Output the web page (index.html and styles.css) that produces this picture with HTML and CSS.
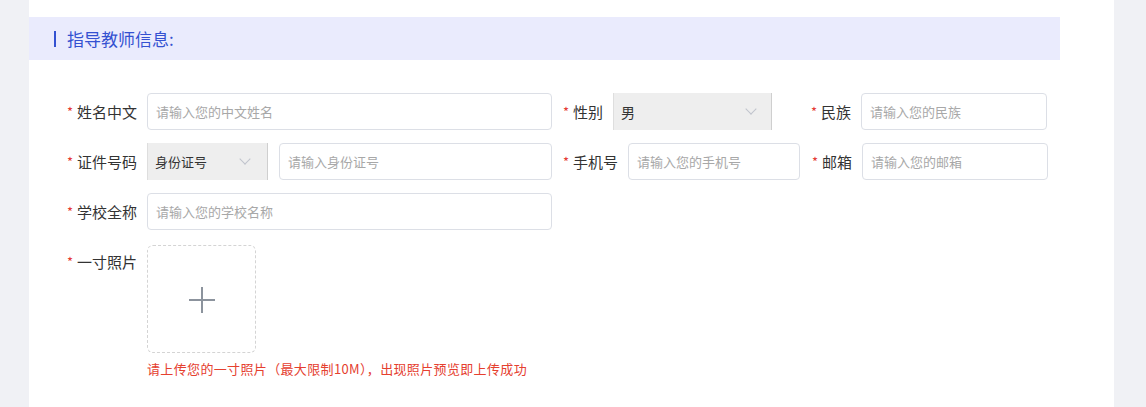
FILE: index.html
```html
<!DOCTYPE html>
<html lang="zh">
<head>
	<meta charset="utf-8">
	<meta name="viewport" content="width=device-width, initial-scale=1.0">
	<link rel="stylesheet" href="styles.css">
	<title>指导教师信息</title>
</head>
<body>
	<div class="page">
		<div class="panel">
			<div class="section-title"><span class="bar"></span>指导教师信息:</div>
			<form class="form">
				<div class="row">
					<div class="field f1">
						<label class="label"><span class="star">*</span>姓名中文</label>
						<input class="input" placeholder="请输入您的中文姓名">
					</div>
					<div class="field f2">
						<label class="label"><span class="star">*</span>性别</label>
						<div class="select sel-sex">男<span class="chev"></span></div>
					</div>
					<div class="field f3">
						<label class="label"><span class="star">*</span>民族</label>
						<input class="input" placeholder="请输入您的民族">
					</div>
				</div>
				<div class="row">
					<div class="field f1">
						<label class="label"><span class="star">*</span>证件号码</label>
						<div class="select sel-id">身份证号<span class="chev"></span></div>
						<input class="input" placeholder="请输入身份证号">
					</div>
					<div class="field f2b">
						<label class="label"><span class="star">*</span>手机号</label>
						<input class="input" placeholder="请输入您的手机号">
					</div>
					<div class="field f3">
						<label class="label"><span class="star">*</span>邮箱</label>
						<input class="input" placeholder="请输入您的邮箱">
					</div>
				</div>
				<div class="row">
					<div class="field f1">
						<label class="label"><span class="star">*</span>学校全称</label>
						<input class="input" placeholder="请输入您的学校名称">
					</div>
				</div>
				<div class="row">
					<div class="field photo">
						<label class="label"><span class="star">*</span>一寸照片</label>
						<div class="upload-col">
							<div class="upload"><span class="plus"></span></div>
							<p class="tip">请上传您的一寸照片（最大限制10M），出现照片预览即上传成功</p>
						</div>
					</div>
				</div>
			</form>
		</div>
		<div class="side"></div>
	</div>
</body>
</html>
```

FILE: styles.css
```css
body {
	margin: 0;
	background: #f0f1f5;
	font-family: "Noto Sans CJK SC", "Noto Sans", sans-serif;
	color: #333;
	overflow: hidden;
}
.page {
	display: flex;
	height: 407px;
	padding-left: 29px;
}
.panel {
	width: 1085px;
	background: #fff;
	padding-top: 17px;
}
.section-title {
	display: flex;
	align-items: center;
	width: 1031px;
	height: 43px;
	padding-left: 25px;
	box-sizing: border-box;
	background: #eaebfd;
	color: #3451d1;
	font-size: 17px;
}
.bar {
	width: 2px;
	height: 16px;
	background: #3451d1;
	margin-right: 11px;
}
.form {
	padding: 33px 0 0 38px;
	margin: 0;
}
.row {
	display: flex;
	gap: 11px;
	margin-bottom: 13px;
}
.field {
	display: flex;
	align-items: flex-start;
}
.f1 { width: 485px; }
.f2 { width: 209px; }
.f2b { width: 237px; }
.f3 { width: 236px; margin-left: 1px; }
.f2 + .f3 { margin-left: 28px; }
.label {
	display: flex;
	height: 37px;
	align-items: center;
	padding-right: 10px;
	font-size: 15px;
	color: #333;
	white-space: nowrap;
}
.star {
	width: 10px;
	color: #e53935;
	font-size: 13px;
}
.input {
	flex: 1;
	min-width: 0;
	height: 37px;
	box-sizing: border-box;
	border: 1px solid #dcdfe6;
	border-radius: 4px;
	padding: 0 8px;
	font: 13px "Noto Sans CJK SC", sans-serif;
	color: #333;
	outline: none;
}
.input::placeholder {
	color: #a8a8a8;
}
.select {
	position: relative;
	height: 37px;
	box-sizing: border-box;
	display: flex;
	align-items: center;
	padding-left: 7px;
	background: #eeeeee;
	border-left: 1px solid #dedede;
	border-right: 1px solid #cfcfcf;
	font-size: 14px;
	color: #333;
}
.sel-sex { width: 159px; }
.sel-id { width: 121px; margin-right: 11px; font-size: 13px; }
.chev {
	position: absolute;
	right: 16px;
	top: 12px;
	width: 7px;
	height: 7px;
	border-right: 1px solid #c0c4cc;
	border-bottom: 1px solid #c0c4cc;
	transform: rotate(45deg);
}
.sel-id .chev { right: 18px; }
.upload-col {
	display: flex;
	flex-direction: column;
	padding-top: 2px;
}
.upload {
	position: relative;
	width: 109px;
	height: 108px;
	box-sizing: border-box;
	border: 1px dashed #d4d4d4;
	border-radius: 6px;
}
.plus {
	position: absolute;
	left: 41px;
	top: 41px;
	width: 26px;
	height: 26px;
}
.plus::before, .plus::after {
	content: "";
	position: absolute;
	background: #8c939d;
}
.plus::before {
	left: 0;
	top: 12px;
	width: 26px;
	height: 2px;
}
.plus::after {
	left: 12px;
	top: 0;
	width: 2px;
	height: 26px;
}
.tip {
	margin: 6px 0 0;
	font-size: 13px;
	letter-spacing: 0.35px;
	color: #e5402f;
	white-space: nowrap;
}
.side {
	flex: 1;
}
```
